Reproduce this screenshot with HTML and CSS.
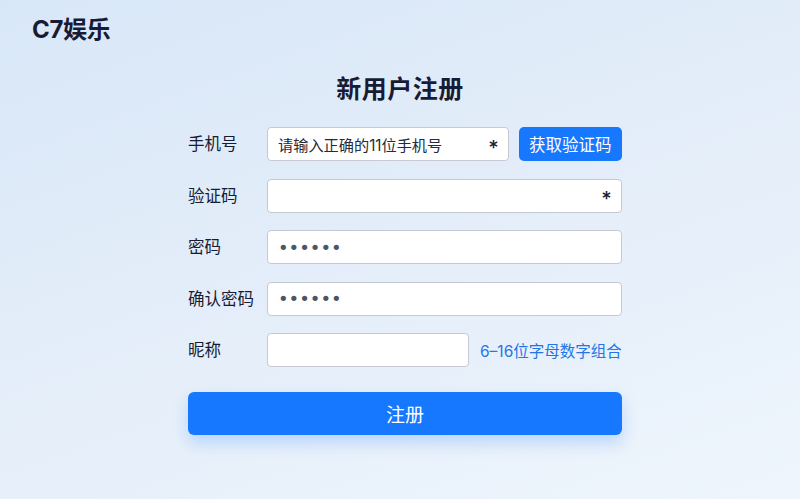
FILE: index.html
```html
<!DOCTYPE html>
<html lang="zh-CN">
<head>
<meta charset="utf-8">
<title>C7娱乐 - 新用户注册</title>
<link rel="stylesheet" href="styles.css">
</head>
<body>
  <header class="topbar">
    <div class="logo">C7娱乐</div>
  </header>
  <h1 class="title">新用户注册</h1>
  <form class="reg-form" onsubmit="return false">
    <label class="label">手机号</label>
    <div class="field-row">
      <div class="input grow">
        <span class="placeholder">请输入正确的11位手机号</span>
        <span class="req">*</span>
      </div>
      <button type="button" class="code-btn">获取验证码</button>
    </div>

    <label class="label">验证码</label>
    <div class="field-row">
      <div class="input grow">
        <span class="placeholder"></span>
        <span class="req">*</span>
      </div>
    </div>

    <label class="label">密码</label>
    <div class="field-row">
      <div class="input grow"><span class="dots">••••••</span></div>
    </div>

    <label class="label">确认密码</label>
    <div class="field-row">
      <div class="input grow"><span class="dots">••••••</span></div>
    </div>

    <label class="label">昵称</label>
    <div class="field-row">
      <div class="input nick"></div>
      <span class="hint">6–16位字母数字组合</span>
    </div>

    <button type="submit" class="submit-btn">注册</button>
  </form>
</body>
</html>
```
FILE: styles.css
```css
* {
  box-sizing: border-box;
}

html,
body {
  margin: 0;
  height: 100%;
}

body {
  font-family: "Inter", "Noto Sans CJK SC", sans-serif;
  color: #171c34;
  background: linear-gradient(160deg, #d8e7f8 0%, #e3edf9 45%, #eef5fc 100%);
  overflow: hidden;
}

.topbar {
  padding: 16px 32px 0;
  height: 44px;
}

.logo {
  font-size: 24px;
  font-weight: 700;
  line-height: 28px;
  letter-spacing: -0.3px;
}

.title {
  margin: 28px 0 0;
  text-align: center;
  font-size: 25px;
  font-weight: 700;
  line-height: 34px;
  letter-spacing: 0.5px;
}

.reg-form {
  width: 433px;
  margin: 21px 0 0 188px;
  display: grid;
  grid-template-columns: 79px 1fr;
  row-gap: 17.5px;
  align-items: center;
}

.label {
  font-size: 16.5px;
  line-height: 34px;
}

.field-row {
  display: flex;
  align-items: center;
  gap: 10px;
}

.input {
  height: 34px;
  background: #fff;
  border: 1px solid #c6c9d1;
  border-radius: 4px;
  display: flex;
  align-items: center;
  padding: 0 10px;
}

.grow {
  flex: 1;
}

.nick {
  width: 202px;
}

.placeholder {
  flex: 1;
  font-size: 15.2px;
  color: #262a3a;
}

.req {
  font-size: 20px;
  font-weight: 500;
  line-height: 1;
  padding-top: 7px;
  margin-right: -1px;
  color: #1c2033;
}

.dots {
  font-size: 18px;
  letter-spacing: 0;
  color: #4e5462;
  font-family: "DejaVu Sans", sans-serif;
}

.code-btn {
  height: 34px;
  width: 103px;
  border: 0;
  border-radius: 5px;
  background: #1677ff;
  color: #fff;
  font-family: inherit;
  font-size: 16.5px;
  padding: 0;
}

.hint {
  font-size: 15.5px;
  color: #2277e6;
  white-space: nowrap;
  margin-left: 1px;
}

.submit-btn {
  grid-column: 1 / -1;
  margin-top: 7px;
  height: 43px;
  border: 0;
  border-radius: 6px;
  background: #1677ff;
  color: #fff;
  font-family: inherit;
  font-size: 19px;
  box-shadow: 0 8px 16px rgba(22, 119, 255, 0.22);
}
```
